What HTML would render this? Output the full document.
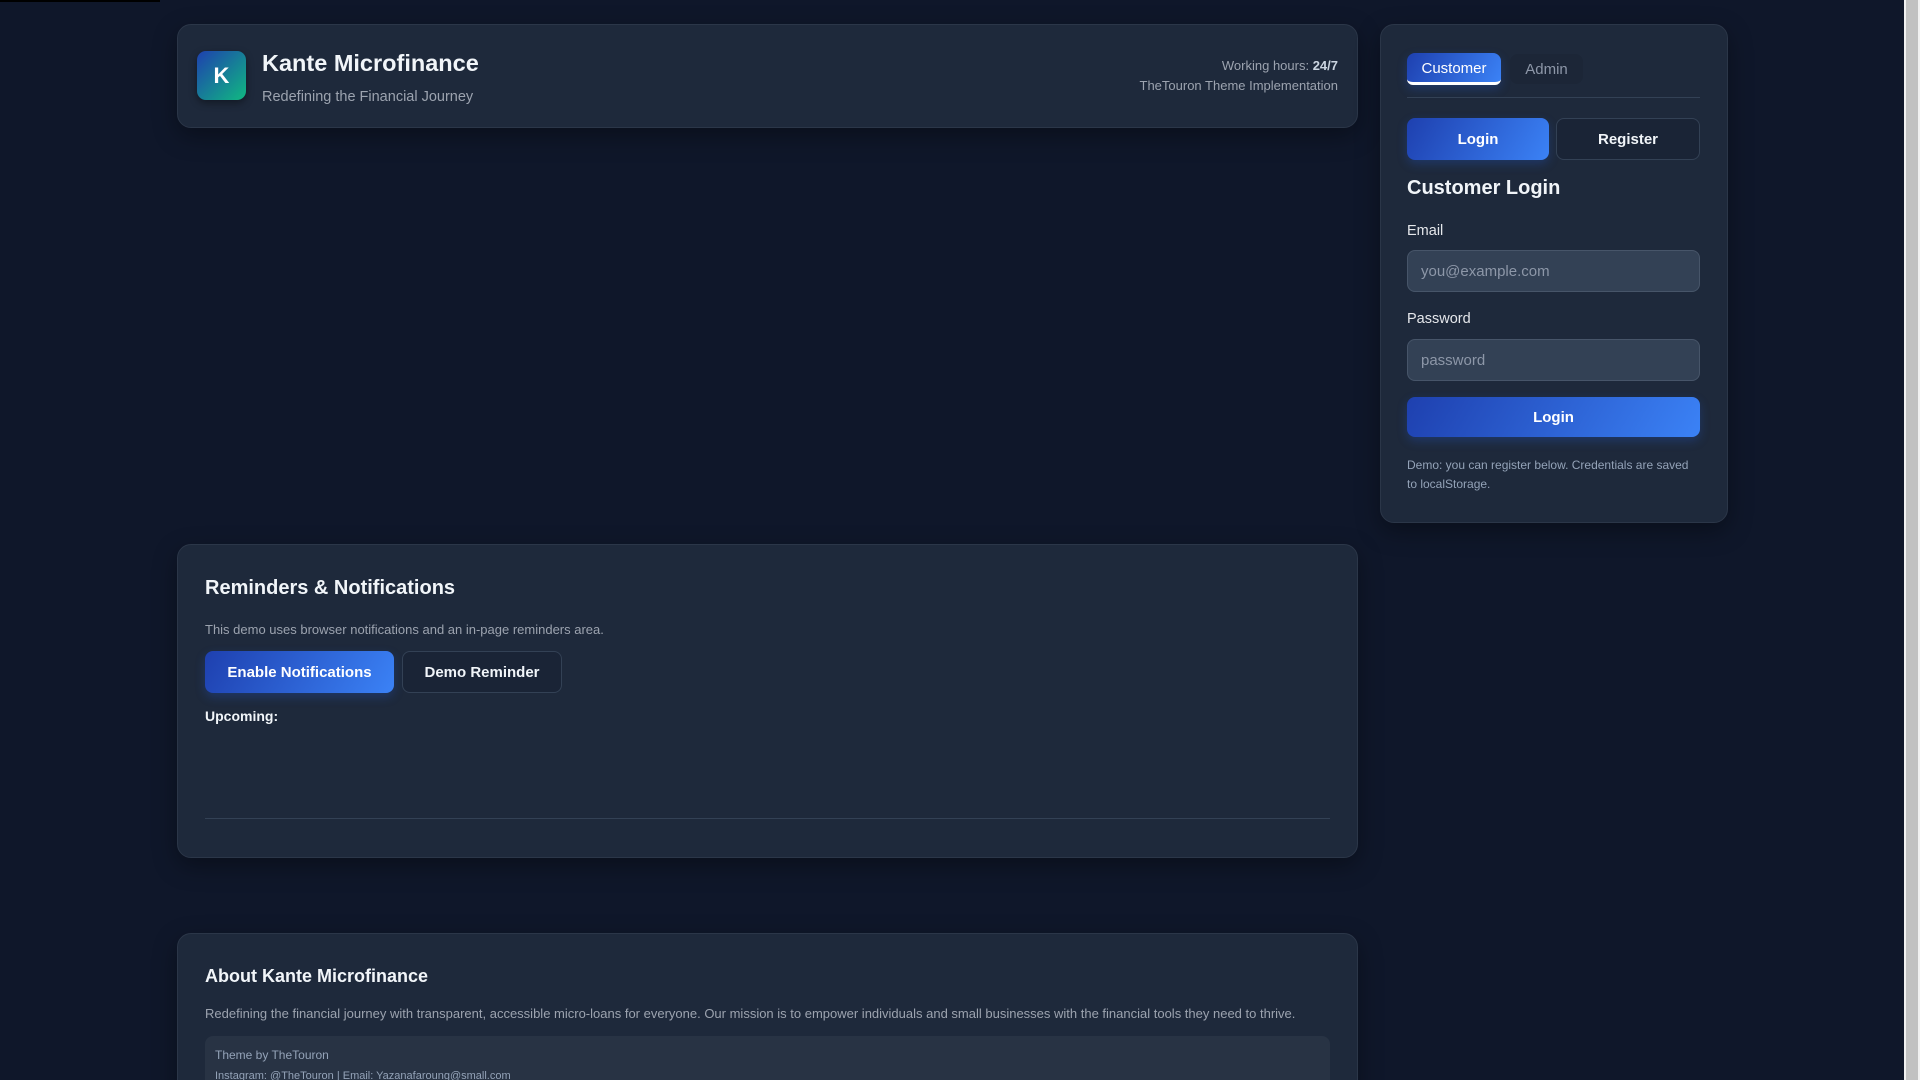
<!DOCTYPE html>
<html style="overflow:hidden;height:1080px"><head><meta charset="utf-8"><style>
*{box-sizing:border-box;margin:0;padding:0}
body{width:1920px;height:1080px;overflow:hidden;background:#0f172a;font-family:"Liberation Sans",sans-serif;color:#e5e7eb;position:relative}
.abs{position:absolute}
.card{position:absolute;background:#1e293b;border:1px solid #2b3648;border-radius:14px;box-shadow:0 8px 24px rgba(0,0,0,.35)}
.btnp{position:absolute;background:linear-gradient(120deg,#1e40af,#3b82f6);border-radius:8px;color:#fff;font-weight:bold;font-size:15px;display:flex;align-items:center;justify-content:center;box-shadow:0 4px 10px rgba(37,99,235,.25)}
.btno{position:absolute;background:#1a2436;border:1px solid #334155;border-radius:8px;color:#f1f5f9;font-weight:bold;font-size:15px;display:flex;align-items:center;justify-content:center}
.inp{position:absolute;background:#334155;border:1px solid #475569;border-radius:8px;color:#8d97a8;font-size:15px;padding-left:13px;display:flex;align-items:center}
</style></head><body>
<div class="abs" style="left:0;top:0;width:160px;height:2px;background:#000"></div>
<div class="abs" style="left:1904px;top:0;width:16px;height:1080px;background:#f1f1f1"></div>
<div class="abs" style="left:1906px;top:0;width:12px;height:1080px;background:#c1c1c1"></div>

<div class="card" style="left:177px;top:24px;width:1181px;height:104px"></div>
<div class="abs" style="left:197px;top:51px;width:49px;height:49px;border-radius:9px;background:linear-gradient(135deg,#1e40af,#10b981);box-shadow:0 3px 8px rgba(0,0,0,.4);color:#fff;font-weight:bold;font-size:22px;display:flex;align-items:center;justify-content:center">K</div>
<div class="abs" style="left:262px;top:50px;font-size:23.5px;font-weight:bold;color:#f1f5f9">Kante Microfinance</div>
<div class="abs" style="left:262px;top:89px;font-size:14.5px;color:#9ca3af">Redefining the Financial Journey</div>
<div class="abs" style="right:582px;top:56px;font-size:13px;color:#9ca3af;text-align:right;line-height:20px">Working hours: <b style="color:#cbd5e1">24/7</b><br>TheTouron Theme Implementation</div>

<div class="card" style="left:1380px;top:24px;width:348px;height:499px"></div>
<div class="btnp" style="left:1407px;top:53px;width:94px;height:32px;font-weight:normal;font-size:15px;border-bottom:3px solid #fff;border-radius:8px 8px 6px 6px;padding-top:2px">Customer</div>
<div class="abs" style="left:1510px;top:54px;width:73px;height:30px;border-radius:8px;background:#1c2637;color:#8d97a8;font-size:15px;display:flex;align-items:center;justify-content:center">Admin</div>
<div class="abs" style="left:1407px;top:97px;width:293px;height:1px;background:#334155"></div>
<div class="btnp" style="left:1407px;top:118px;width:142px;height:42px">Login</div>
<div class="btno" style="left:1556px;top:118px;width:144px;height:42px">Register</div>
<div class="abs" style="left:1407px;top:177px;font-size:20px;font-weight:bold;color:#f1f5f9">Customer Login</div>
<div class="abs" style="left:1407px;top:223px;font-size:14.5px;color:#e5e7eb">Email</div>
<div class="inp" style="left:1407px;top:250px;width:293px;height:42px">you@example.com</div>
<div class="abs" style="left:1407px;top:311px;font-size:14.5px;color:#e5e7eb">Password</div>
<div class="inp" style="left:1407px;top:339px;width:293px;height:42px">password</div>
<div class="btnp" style="left:1407px;top:397px;width:293px;height:40px">Login</div>
<div class="abs" style="left:1407px;top:456px;width:300px;font-size:12px;line-height:19px;color:#94a3b8;white-space:nowrap">Demo: you can register below. Credentials are saved<br>to localStorage.</div>

<div class="card" style="left:177px;top:544px;width:1181px;height:314px"></div>
<div class="abs" style="left:205px;top:577px;font-size:20px;font-weight:bold;color:#f1f5f9">Reminders &amp; Notifications</div>
<div class="abs" style="left:205px;top:622px;font-size:13px;color:#9ca3af">This demo uses browser notifications and an in-page reminders area.</div>
<div class="btnp" style="left:205px;top:651px;width:189px;height:42px">Enable Notifications</div>
<div class="btno" style="left:402px;top:651px;width:160px;height:42px">Demo Reminder</div>
<div class="abs" style="left:205px;top:708px;font-size:14px;font-weight:bold;color:#f1f5f9">Upcoming:</div>
<div class="abs" style="left:205px;top:818px;width:1125px;height:1px;background:#334155"></div>

<div class="card" style="left:177px;top:933px;width:1181px;height:160px;border-bottom-left-radius:0;border-bottom-right-radius:0"></div>
<div class="abs" style="left:205px;top:966px;font-size:18px;font-weight:bold;color:#f1f5f9">About Kante Microfinance</div>
<div class="abs" style="left:205px;top:1006px;font-size:13px;color:#9ca3af">Redefining the financial journey with transparent, accessible micro-loans for everyone. Our mission is to empower individuals and small businesses with the financial tools they need to thrive.</div>
<div class="abs" style="left:205px;top:1036px;width:1125px;height:44px;background:#283344;border-radius:8px 8px 0 0"></div>
<div class="abs" style="left:215px;top:1048px;font-size:12px;color:#94a3b8">Theme by TheTouron</div>
<div class="abs" style="left:215px;top:1070px;font-size:11px;color:#94a3b8;height:10px;overflow:hidden;line-height:13px">Instagram: @TheTouron | Email: Yazanafaroung@small.com</div>
</body></html>
